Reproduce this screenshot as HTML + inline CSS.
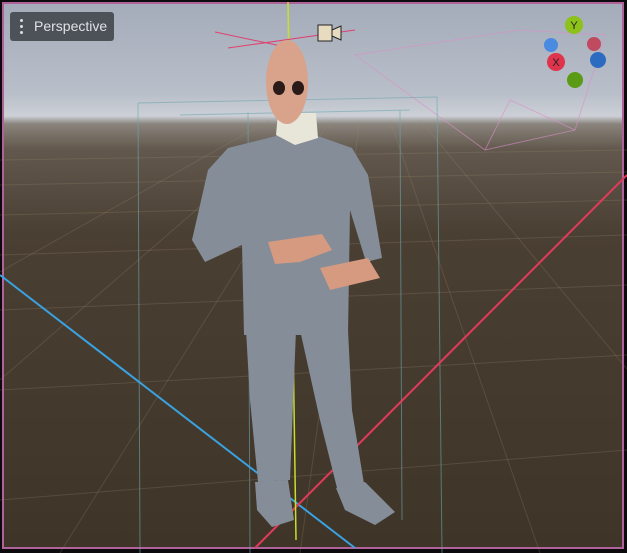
<!DOCTYPE html><html><head><style>
body{margin:0;width:627px;height:553px;overflow:hidden;background:#0c0a0c;font-family:"Liberation Sans",sans-serif}
#v{position:absolute;left:2px;top:2px;width:622px;height:547px;border:2px solid #b0629a;box-sizing:border-box;overflow:hidden;
background:linear-gradient(#a4acba 0,#b9bfc9 90px,#ccd0d6 112px,#8a847c 120px,#62584d 145px,#4a3f33 230px,#3e3428 547px)}
#btn{position:absolute;left:10px;top:12px;width:104px;height:29px;background:#4d5158;border-radius:3px;color:#e0e2e5;font-size:14px;line-height:29px}
#btn span{position:absolute;left:24px}
#btn i{position:absolute;left:10px;top:7px;width:3px;height:3px;background:#ddd;border-radius:2px;box-shadow:0 6px #ddd,0 12px #ddd}
svg{position:absolute;left:0;top:0}
</style></head><body>
<div id="v"></div>
<svg width="627" height="553">
<g stroke="#9a8a70" stroke-opacity=".25" stroke-width="1">
<path d="M0 160L627 150M0 185L627 172M0 215L627 200M0 255L627 235M0 310L627 285M0 390L627 355M0 500L627 450"/>
<path d="M300 120L-200 553M330 120L60 553M360 120L300 553M390 120L540 553M420 120L780 553M270 120L-500 553"/>
</g>
<g stroke="#6fa6b0" stroke-opacity=".6" fill="none">
<path d="M138 103L437 97L442 553M138 103L140 553M180 115L410 110M248 112L250 553M400 110L402 520"/>
</g>
<g stroke="#d890c8" stroke-opacity=".6" fill="none"><path d="M355 55L485 150L575 130L605 35L520 30Z M485 150L510 100L575 130"/></g>
<path d="M0 275L355 548" stroke="#3aa2e0" stroke-width="2"/>
<path d="M627 175L255 548" stroke="#e23a5a" stroke-width="2"/>
<path d="M288 2L296 540" stroke="#c6e02a" stroke-width="1.5"/>
<path d="M215 32L300 50M228 48L355 30" stroke="#e04070" stroke-width="1"/>
<g fill="#858d99">
<path d="M228 148L280 135L315 135L352 148L368 175L382 258L366 262L350 210L348 335L244 335L242 245L205 262L192 240L208 170Z"/>
<path d="M246 330L296 330L290 480L258 482L250 400Z"/>
<path d="M300 330L348 330L352 410L365 490L338 492L320 420Z"/>
<path d="M255 482L288 480L294 520L272 527L257 510Z M336 488L365 482L395 512L375 525L345 510Z"/>
</g>
<path d="M278 113L316 113L318 138L295 145L276 135Z" fill="#e8e6d8"/>
<ellipse cx="287" cy="82" rx="21" ry="42" fill="#d9a28a"/>
<ellipse cx="279" cy="88" rx="6" ry="7" fill="#2a1a18"/><ellipse cx="298" cy="88" rx="6" ry="7" fill="#2a1a18"/>
<path d="M268 242L322 234L332 250L300 262L275 264Z M320 268L368 258L380 278L330 290Z" fill="#d59a80"/>
<circle cx="574" cy="25" r="9" fill="#8cc21a"/><circle cx="594" cy="44" r="7" fill="#c04a60"/><circle cx="551" cy="45" r="7" fill="#4a8ae0"/>
<circle cx="556" cy="62" r="9" fill="#e0334c"/><circle cx="598" cy="60" r="8" fill="#2c6cc0"/><circle cx="575" cy="80" r="8" fill="#5a9a14"/>
<text x="574" y="29" font-size="11" fill="#222" text-anchor="middle" font-family="Liberation Sans">Y</text>
<text x="556" y="66" font-size="11" fill="#222" text-anchor="middle" font-family="Liberation Sans">X</text>
<path d="M318 25h14v16h-14z" fill="#e8dcc0" stroke="#222"/><path d="M332 30l9-4v14l-9-4z" fill="#e8dcc0" stroke="#222"/>
</svg>
<div id="btn"><i></i><span>Perspective</span></div>
</body></html>
